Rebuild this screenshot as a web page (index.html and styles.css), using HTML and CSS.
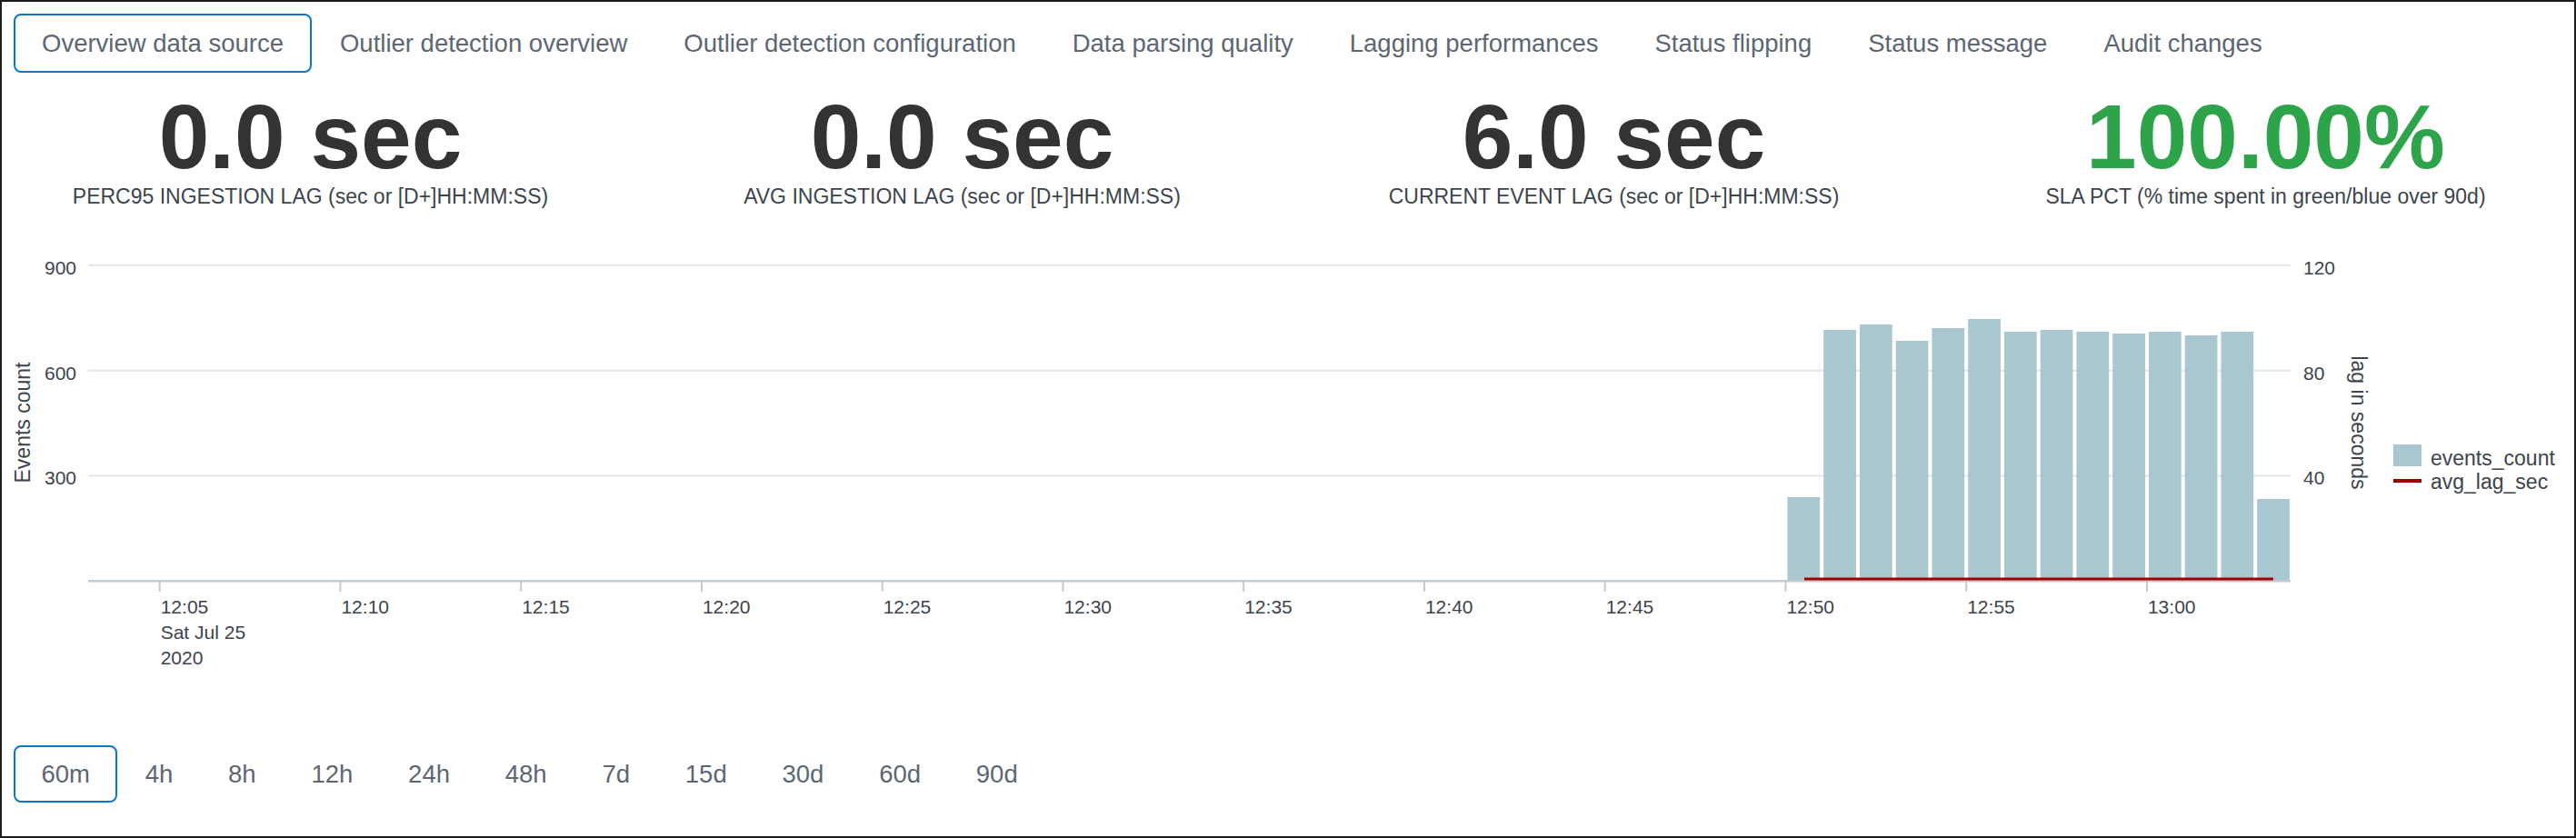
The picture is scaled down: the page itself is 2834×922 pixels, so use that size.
FILE: index.html
```html
<!DOCTYPE html>
<html lang="en">
<head>
<meta charset="utf-8">
<title>Overview data source</title>
<link rel="stylesheet" href="styles.css">
</head>
<body>
<div class="page">
  <nav class="tabs">
    <button class="tab active">Overview data source</button>
    <button class="tab">Outlier detection overview</button>
    <button class="tab">Outlier detection configuration</button>
    <button class="tab">Data parsing quality</button>
    <button class="tab">Lagging performances</button>
    <button class="tab">Status flipping</button>
    <button class="tab">Status message</button>
    <button class="tab">Audit changes</button>
  </nav>

  <section class="stats">
    <div class="stat">
      <div class="value">0.0 sec</div>
      <div class="label">PERC95 INGESTION LAG (sec or [D+]HH:MM:SS)</div>
    </div>
    <div class="stat">
      <div class="value">0.0 sec</div>
      <div class="label">AVG INGESTION LAG (sec or [D+]HH:MM:SS)</div>
    </div>
    <div class="stat">
      <div class="value">6.0 sec</div>
      <div class="label">CURRENT EVENT LAG (sec or [D+]HH:MM:SS)</div>
    </div>
    <div class="stat">
      <div class="value good">100.00%</div>
      <div class="label">SLA PCT (% time spent in green/blue over 90d)</div>
    </div>
  </section>

  <svg class="chart" width="2830" height="570" viewBox="2 250 2830 570" xmlns="http://www.w3.org/2000/svg">
    <g class="grid">
      <line x1="97" y1="291.8" x2="2520" y2="291.8"/>
      <line x1="97" y1="407.7" x2="2520" y2="407.7"/>
      <line x1="97" y1="523.5" x2="2520" y2="523.5"/>
    </g>
    <g class="ylabels left">
      <text x="84" y="301.5">900</text>
      <text x="84" y="417.5">600</text>
      <text x="84" y="533.3">300</text>
    </g>
    <g class="ylabels right">
      <text x="2534" y="301.5">120</text>
      <text x="2534" y="417.5">80</text>
      <text x="2534" y="533.3">40</text>
    </g>
    <text class="axis-title" transform="rotate(-90 33 465)" x="33" y="465">Events count</text>
    <text class="axis-title" transform="rotate(90 2587 465)" x="2587" y="465">lag in seconds</text>

    <g class="bars">
      <rect x="1966.45" y="547" width="35.75" height="91.3"/>
      <rect x="2006.2" y="363" width="35.75" height="275.3"/>
      <rect x="2045.95" y="357" width="35.75" height="281.3"/>
      <rect x="2085.7" y="375" width="35.75" height="263.3"/>
      <rect x="2125.45" y="361" width="35.75" height="277.3"/>
      <rect x="2165.2" y="351" width="35.75" height="287.3"/>
      <rect x="2204.95" y="365" width="35.75" height="273.3"/>
      <rect x="2244.7" y="363" width="35.75" height="275.3"/>
      <rect x="2284.45" y="365" width="35.75" height="273.3"/>
      <rect x="2324.2" y="367" width="35.75" height="271.3"/>
      <rect x="2363.95" y="365" width="35.75" height="273.3"/>
      <rect x="2403.7" y="369" width="35.75" height="269.3"/>
      <rect x="2443.45" y="365" width="35.75" height="273.3"/>
      <rect x="2483.2" y="549" width="35.75" height="89.3"/>
    </g>

    <line class="axis" x1="97" y1="639.3" x2="2520" y2="639.3"/>
    <g class="ticks">
      <line x1="175.7" y1="639" x2="175.7" y2="651"/>
      <line x1="374.45" y1="639" x2="374.45" y2="651"/>
      <line x1="573.2" y1="639" x2="573.2" y2="651"/>
      <line x1="771.95" y1="639" x2="771.95" y2="651"/>
      <line x1="970.7" y1="639" x2="970.7" y2="651"/>
      <line x1="1169.45" y1="639" x2="1169.45" y2="651"/>
      <line x1="1368.2" y1="639" x2="1368.2" y2="651"/>
      <line x1="1566.95" y1="639" x2="1566.95" y2="651"/>
      <line x1="1765.7" y1="639" x2="1765.7" y2="651"/>
      <line x1="1964.45" y1="639" x2="1964.45" y2="651"/>
      <line x1="2163.2" y1="639" x2="2163.2" y2="651"/>
      <line x1="2361.95" y1="639" x2="2361.95" y2="651"/>
    </g>
    <line class="lag" x1="1985" y1="637" x2="2501" y2="637"/>

    <g class="xlabels">
      <text x="176.7" y="675">12:05<tspan x="176.7" y="703">Sat Jul 25</tspan><tspan x="176.7" y="731">2020</tspan></text>
      <text x="375.45" y="675">12:10</text>
      <text x="574.2" y="675">12:15</text>
      <text x="772.95" y="675">12:20</text>
      <text x="971.7" y="675">12:25</text>
      <text x="1170.45" y="675">12:30</text>
      <text x="1369.2" y="675">12:35</text>
      <text x="1567.95" y="675">12:40</text>
      <text x="1766.7" y="675">12:45</text>
      <text x="1965.45" y="675">12:50</text>
      <text x="2164.2" y="675">12:55</text>
      <text x="2362.95" y="675">13:00</text>
    </g>

    <g class="legend">
      <rect x="2633" y="489" width="31" height="24"/>
      <text x="2674" y="512">events_count</text>
      <line x1="2633" y1="529" x2="2664" y2="529"/>
      <text x="2674" y="538">avg_lag_sec</text>
    </g>
  </svg>

  <nav class="ranges">
    <button class="tab range active">60m</button>
    <button class="tab range">4h</button>
    <button class="tab range">8h</button>
    <button class="tab range">12h</button>
    <button class="tab range">24h</button>
    <button class="tab range">48h</button>
    <button class="tab range">7d</button>
    <button class="tab range">15d</button>
    <button class="tab range">30d</button>
    <button class="tab range">60d</button>
    <button class="tab range">90d</button>
  </nav>
</div>
</body>
</html>
```

FILE: styles.css
```css
html, body {
  margin: 0;
  padding: 0;
  background: #ffffff;
}

body {
  width: 2834px;
  height: 922px;
  box-sizing: border-box;
  border: 2px solid #1c1c1c;
  overflow: hidden;
  font-family: "Liberation Sans", Arial, sans-serif;
}

.page {
  display: flex;
  flex-direction: column;
}

.tabs {
  display: flex;
  padding: 13px 0 0 13px;
}

.tab {
  display: flex;
  align-items: center;
  height: 65px;
  box-sizing: border-box;
  margin: 0;
  padding: 0 29px;
  border: 2px solid transparent;
  border-radius: 8px;
  background: none;
  font-family: "Liberation Sans", Arial, sans-serif;
  font-size: 27.5px;
  color: #5c6773;
  white-space: nowrap;
  cursor: pointer;
}

.tab.active {
  border-color: #0a78c2;
}

.stats {
  display: grid;
  grid-template-columns: repeat(4, 1fr);
  margin: 20px -19px 0;
}

.stat {
  display: flex;
  flex-direction: column;
  align-items: center;
  text-align: center;
}

.value {
  font-size: 100px;
  line-height: 100px;
  height: 100px;
  font-weight: 700;
  color: #333333;
  white-space: nowrap;
}

.value.good {
  color: #2ea44a;
}

.label {
  margin-top: 2px;
  font-size: 23px;
  line-height: 28px;
  color: #3c444d;
  white-space: nowrap;
}

.chart {
  display: block;
  margin-top: 20px;
  font-family: "Liberation Sans", Arial, sans-serif;
}

.chart .grid line {
  stroke: #e1e6eb;
  stroke-width: 2;
}

.chart .axis {
  stroke: #c3cbd4;
  stroke-width: 2.5;
}

.chart .ticks line {
  stroke: #c3cbd4;
  stroke-width: 2;
}

.chart text {
  font-size: 21px;
  fill: #3c444d;
}

.chart .ylabels.left text {
  text-anchor: end;
}

.chart .axis-title {
  font-size: 23px;
  text-anchor: middle;
}

.chart .bars rect {
  fill: #a9c7d0;
}

.chart .lag {
  stroke: #a10000;
  stroke-width: 3;
}

.chart .legend rect {
  fill: #a9c7d0;
}

.chart .legend line {
  stroke: #a10000;
  stroke-width: 4;
}

.chart .legend text {
  font-size: 23px;
}

.ranges {
  display: flex;
  padding-left: 13px;
}

.range {
  height: 63px;
  padding: 0 28.4px;
}
```
